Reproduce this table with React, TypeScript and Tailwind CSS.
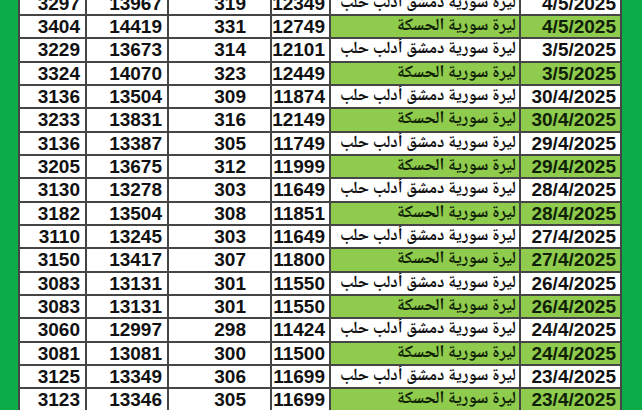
import React from "react";

type Row = [string, string, string, string, boolean, string];

const rows: Row[] = [
  ["3297", "13967", "319", "12349", false, "4/5/2025"],
  ["3404", "14419", "331", "12749", true, "4/5/2025"],
  ["3229", "13673", "314", "12101", false, "3/5/2025"],
  ["3324", "14070", "323", "12449", true, "3/5/2025"],
  ["3136", "13504", "309", "11874", false, "30/4/2025"],
  ["3233", "13831", "316", "12149", true, "30/4/2025"],
  ["3136", "13387", "305", "11749", false, "29/4/2025"],
  ["3205", "13675", "312", "11999", true, "29/4/2025"],
  ["3130", "13278", "303", "11649", false, "28/4/2025"],
  ["3182", "13504", "308", "11851", true, "28/4/2025"],
  ["3110", "13245", "303", "11649", false, "27/4/2025"],
  ["3150", "13417", "307", "11800", true, "27/4/2025"],
  ["3083", "13131", "301", "11550", false, "26/4/2025"],
  ["3083", "13131", "301", "11550", true, "26/4/2025"],
  ["3060", "12997", "298", "11424", false, "24/4/2025"],
  ["3081", "13081", "300", "11500", true, "24/4/2025"],
  ["3125", "13349", "306", "11699", false, "23/4/2025"],
  ["3123", "13346", "305", "11699", true, "23/4/2025"],
];

const cell =
  "flex items-center justify-end h-full border-r-2 border-b-2 border-[#454545] leading-none whitespace-nowrap overflow-hidden";

export default function App() {
  return (
    <div className="w-[642px] h-[410px] overflow-hidden flex items-start bg-[#0dac4b]">
      <div className="w-[18px] shrink-0" />
      <div className="w-[604px] shrink-0 flex flex-col bg-white border-l-2 border-[#454545] mt-[-7.33px]">
        {rows.map((r, i) => (
          <div
            key={i}
            className="grid grid-cols-[67px_82px_103px_59px_190px_101px] h-[23.33px] shrink-0 font-['Liberation_Sans',Arial,sans-serif] font-bold text-[19px] text-[#111]"
          >
            <div className={`${cell} pr-[5px]`}>{r[0]}</div>
            <div className={`${cell} pr-[5px]`}>{r[1]}</div>
            <div className={`${cell} pr-[24px]`}>{r[2]}</div>
            <div className={`${cell} pr-[4px]`}>{r[3]}</div>
            <div
              dir="rtl"
              className={`${cell} justify-start pr-[3px] font-['Noto_Naskh_Arabic','DejaVu_Sans',sans-serif] text-[17px] ${
                r[4] ? "bg-[#8fcb4c] text-[#0f1f08]" : ""
              }`}
            >
              {r[4] ? "ليرة سورية الحسكة" : "ليرة سورية دمشق أدلب حلب"}
            </div>
            <div
              className={`${cell} pr-[4px] ${r[4] ? "bg-[#8fcb4c] text-[#0f1f08]" : ""}`}
            >
              {r[5]}
            </div>
          </div>
        ))}
      </div>
      <div className="flex-1" />
    </div>
  );
}
